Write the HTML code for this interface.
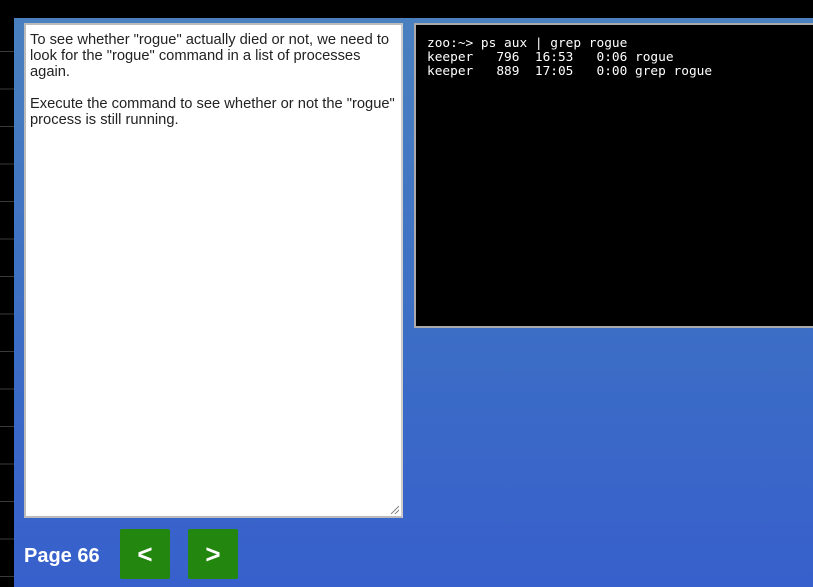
<!DOCTYPE html>
<html><head><meta charset="utf-8"><style>
html,body{margin:0;padding:0;width:813px;height:587px;overflow:hidden;background:#000;}
.bg{position:absolute;left:14px;top:18px;width:799px;height:569px;background:linear-gradient(#4a80bf,#3b6cc6 60%,#3860cc);}
.strip{position:absolute;left:0;top:18px;width:14px;height:569px;background:repeating-linear-gradient(#000 0,#000 33px,#3a3a3a 33px,#3a3a3a 34px,#000 34px,#000 37.5px);}
.ta{position:absolute;left:24px;top:23px;width:375px;height:491px;background:#fff;border:2px solid #bbb;border-right-color:#ccc;box-sizing:content-box;font:14.7px/16px "Liberation Sans",Arial,sans-serif;color:#222;}
.ta p{margin:0 6px 16px 4px;padding-top:7px}
.ta p+p{padding-top:0}
.term{position:absolute;left:414px;top:23px;width:410px;background:#000;border:2px solid #aaa;color:#fff;font:12.8px/14px "DejaVu Sans Mono","Liberation Mono",monospace;white-space:pre;padding:12px 0 0 11px;box-sizing:border-box;height:305px;}
.pg{position:absolute;left:24px;top:545px;color:#fff;font:bold 20px "Liberation Sans",sans-serif;}
.btn{position:absolute;top:529px;width:50px;height:50px;background:#23870f;border-radius:2px;color:#fff;font:bold 26px/50px "Liberation Sans",sans-serif;text-align:center;}
.grip{position:absolute;right:2px;bottom:2px;width:8px;height:8px;background:linear-gradient(135deg,transparent 45%,#888 45%,#888 55%,transparent 55%,transparent 70%,#888 70%,#888 80%,transparent 80%);}
</style></head><body>
<div class="strip"></div>
<div class="bg"></div>
<div class="ta"><p>To see whether "rogue" actually died or not, we need to look for the "rogue" command in a list of processes again.</p><p>Execute the command to see whether or not the "rogue" process is still running.</p><div class="grip"></div></div>
<div class="term">zoo:~&gt; ps aux | grep rogue
keeper   796  16:53   0:06 rogue
keeper   889  17:05   0:00 grep rogue</div>
<div class="pg">Page 66</div>
<div class="btn" style="left:120px">&lt;</div>
<div class="btn" style="left:188px">&gt;</div>
</body></html>
